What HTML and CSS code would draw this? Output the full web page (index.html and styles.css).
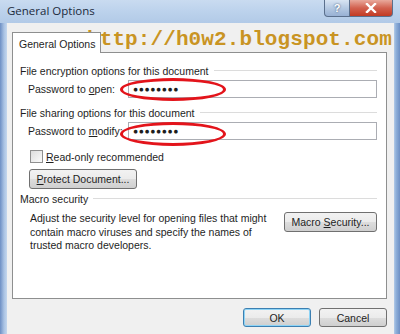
FILE: index.html
```html
<!DOCTYPE html>
<html lang="en">
  <head>
    <title>General Options</title>
    <link rel="stylesheet" href="styles.css">
  </head>
  <body>
    <div class="window">
      <div class="titlebar">
        <span class="title">General Options</span>
        <div class="caption-btns">
          <div class="cap help">?</div>
          <div class="cap close">
            <svg width="14" height="10" viewBox="0 0 14 10"><path d="M3 1 L11 9 M11 1 L3 9" stroke="#fff" stroke-width="2.4" stroke-linecap="square"/></svg>
          </div>
        </div>
      </div>
      <div class="client">
        <div class="tabs">
          <div class="tab">General Options</div>
        </div>
        <div class="panel">
          <div class="group-title"><span>File encryption options for this document</span></div>
          <div class="row">
            <label>Password to <u>o</u>pen:</label>
            <div class="field">&#9679;&#9679;&#9679;&#9679;&#9679;&#9679;&#9679;&#9679;</div>
          </div>
          <div class="group-title"><span>File sharing options for this document</span></div>
          <div class="row">
            <label>Password to <u>m</u>odify:</label>
            <div class="field">&#9679;&#9679;&#9679;&#9679;&#9679;&#9679;&#9679;&#9679;</div>
          </div>
          <div class="check-row">
            <span class="checkbox"></span>
            <span><u>R</u>ead-only recommended</span>
          </div>
          <div class="btn protect"><span><u>P</u>rotect Document...</span></div>
          <div class="group-title macro-title"><span>Macro security</span></div>
          <div class="macro-row">
            <p>Adjust the security level for opening files that might contain macro viruses and specify the names of trusted macro developers.</p>
            <div class="btn macro-btn"><span>Macro <u>S</u>ecurity...</span></div>
          </div>
        </div>
        <div class="footer">
          <div class="btn ok">OK</div>
          <div class="btn">Cancel</div>
        </div>
      </div>
      <div class="watermark">http://h0w2.blogspot.com</div>
      <div class="ring ring-open"></div>
      <div class="ring ring-modify"></div>
    </div>
  </body>
</html>
```

FILE: styles.css
```css
body {
  margin: 0;
  font-family: "Liberation Sans", Tahoma, sans-serif;
  font-size: 10.5px;
  color: #1e1e1e;
}

.window {
  position: relative;
  width: 400px;
  height: 334px;
  overflow: hidden;
  background: linear-gradient(90deg, #6d8fc4 0px, #a9c2e3 4px, #c4d7ee 7px, #c4d7ee 393px, #8fb0da 396px, #6d8fc4 400px);
}

.titlebar {
  height: 23px;
  display: flex;
  justify-content: space-between;
  background: linear-gradient(180deg, #c9dbf0 0%, #bcd2ec 50%, #b2cae7 100%);
}

.title {
  font-family: "Open Sans", sans-serif;
  font-size: 11.5px;
  padding: 3px 0 0 7px;
  color: #1b2a3c;
}

.caption-btns {
  display: flex;
  margin-right: 7px;
  height: 17px;
}

.cap {
  height: 16px;
  border: 1px solid #5a6f8c;
  border-top: none;
  display: flex;
  align-items: center;
  justify-content: center;
}

.help {
  width: 24px;
  border-radius: 0 0 0 4px;
  background: linear-gradient(180deg, #d8e4f2 0%, #b5c9e2 50%, #98b1d4 100%);
  color: #fff;
  font-weight: bold;
  font-size: 11px;
  text-shadow: 0 0 2px #2d4466;
}

.close {
  width: 42px;
  border-left: none;
  border-radius: 0 0 4px 0;
  background: linear-gradient(180deg, #e9a99c 0%, #d2614f 50%, #c23a22 100%);
}

.client {
  margin: 0 6px 0 7px;
  height: 311px;
  background: #f0f0f0;
  padding: 9px 0 0 5px;
  box-sizing: border-box;
}

.tabs {
  display: flex;
  height: 20px;
}

.tab {
  width: 89px;
  height: 21px;
  border: 1px solid #8e8f8f;
  border-bottom: none;
  background: #fff;
  padding: 5px 0 0 6px;
  box-sizing: border-box;
  white-space: nowrap;
  position: relative;
  z-index: 1;
}

.panel {
  width: 375px;
  height: 247px;
  border: 1px solid #8e8f8f;
  background: #fff;
  box-sizing: border-box;
  padding: 11px 9px 0 7px;
}

.group-title {
  display: flex;
  align-items: center;
  gap: 5px;
  height: 13px;
}

.group-title::after {
  content: "";
  flex: 1;
  border-top: 1px solid #dcdcdc;
}

.row {
  display: flex;
  align-items: center;
  margin: 3px 0 8px 8px;
}

.row label {
  width: 100px;
}

.field {
  width: 249px;
  height: 18px;
  border: 1px solid #abadb3;
  box-sizing: border-box;
  padding: 0 0 0 4px;
  font-size: 8.5px;
  letter-spacing: 0.6px;
  line-height: 16px;
}

.check-row {
  display: flex;
  align-items: center;
  gap: 3px;
  margin: 10px 0 0 10px;
}

.checkbox {
  width: 11px;
  height: 11px;
  border: 1px solid #8f8f8f;
  background: linear-gradient(135deg, #dcdcdc, #fbfbfb);
}

.btn {
  height: 20px;
  border: 1px solid #707070;
  border-radius: 3px;
  background: linear-gradient(180deg, #f2f2f2 0%, #ebebeb 50%, #dddddd 51%, #cfcfcf 100%);
  box-sizing: border-box;
  display: flex;
  align-items: center;
  justify-content: center;
}

.protect {
  width: 108px;
  margin: 6px 0 0 9px;
}

.macro-title {
  margin-top: 3px;
}

.macro-row {
  display: flex;
  align-items: flex-start;
  margin: 4px 0 0 10px;
}

.macro-row p {
  margin: 3px 0 0;
  width: 248px;
  line-height: 13.5px;
}

.macro-btn {
  width: 93px;
  margin: 3px 0 0 6px;
}

.footer {
  display: flex;
  justify-content: flex-end;
  gap: 8px;
  margin: 9px 0 0;
  width: 375px;
}

.footer .btn {
  width: 68px;
  height: 19px;
}

.ok {
  border-color: #3c7fb1;
  box-shadow: inset 0 0 0 1px #8ed4f6;
}

.watermark {
  position: absolute;
  left: 87px;
  top: 28px;
  font-family: "Liberation Mono", monospace;
  font-size: 21px;
  font-weight: bold;
  color: #c99423;
  letter-spacing: 0.1px;
}

.ring {
  position: absolute;
  border: 3px solid #e3141b;
  border-radius: 50%;
  box-sizing: border-box;
}

.ring-open {
  left: 120px;
  top: 78px;
  width: 106px;
  height: 23px;
}

.ring-modify {
  left: 120px;
  top: 122px;
  width: 106px;
  height: 24px;
}
```
